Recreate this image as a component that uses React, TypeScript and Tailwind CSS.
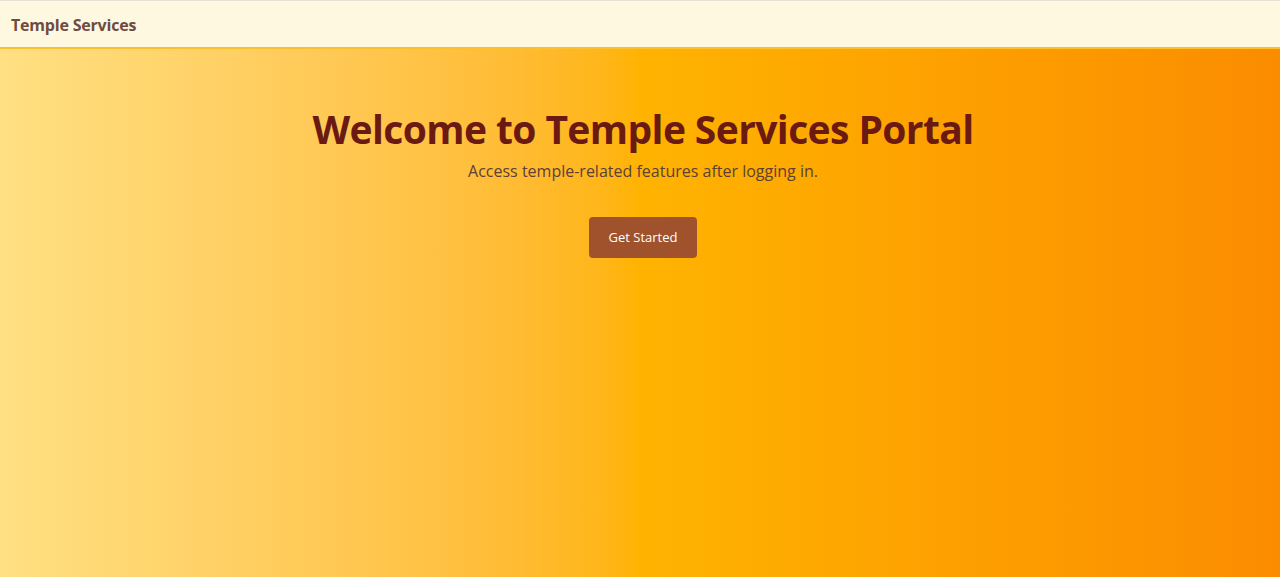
export default function App() {
  return (
    <div
      className="min-h-[577px] flex flex-col bg-gradient-to-r from-[#ffe082] via-[#ffb300] to-[#fb8c00]"
      style={{ fontFamily: '"Open Sans", "Noto Sans", sans-serif' }}
    >
      <header className="h-[49px] flex items-center px-[11px] pt-[1px] bg-[#fff8e1] border-t border-[#e8e2d4] border-b-2 border-b-[#fbc02d]">
        <span className="text-[16px] font-bold text-[#6d4c41] tracking-[-0.2px]">
          Temple Services
        </span>
      </header>
      <main className="flex flex-col items-center pt-[56px] pl-[6px]">
        <h1 className="text-[39px] leading-[48px] font-bold text-[#6b1a12] tracking-[-0.6px]">
          Welcome to Temple Services Portal
        </h1>
        <p className="text-[16px] leading-[24px] text-[#5d4037] mt-[6px]">
          Access temple-related features after logging in.
        </p>
        <button className="mt-[34px] w-[108px] h-[41px] rounded-[4px] bg-[#a0522d] text-white text-[13px]">
          Get Started
        </button>
      </main>
    </div>
  );
}
